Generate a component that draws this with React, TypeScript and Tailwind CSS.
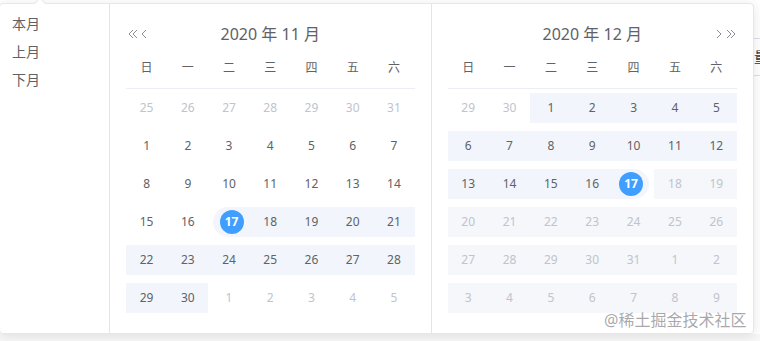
import clsx from "clsx";

type Kind = "other" | "normal" | "range" | "start" | "end" | "disabled";
type Cell = { d: number; kind: Kind };

const WEEK = ["日", "一", "二", "三", "四", "五", "六"];

function range(a: number, b: number, kind: Kind): Cell[] {
  const out: Cell[] = [];
  for (let i = a; i <= b; i++) out.push({ d: i, kind });
  return out;
}

const NOV: Cell[] = [
  ...range(25, 31, "other"),
  ...range(1, 16, "normal"),
  { d: 17, kind: "start" },
  ...range(18, 30, "range"),
  ...range(1, 5, "other"),
];

const DEC: Cell[] = [
  ...range(29, 30, "other"),
  ...range(1, 16, "range"),
  { d: 17, kind: "end" },
  ...range(18, 31, "disabled"),
  ...range(1, 9, "disabled"),
];

function DoubleLeft() {
  return (
    <svg width="10" height="10" viewBox="0 0 10 10" fill="none" stroke="#8a8d93" strokeWidth="1">
      <path d="M5 1 L1 5 L5 9 M9 1 L5 5 L9 9" />
    </svg>
  );
}

function Left() {
  return (
    <svg width="6" height="10" viewBox="0 0 6 10" fill="none" stroke="#8a8d93" strokeWidth="1">
      <path d="M5 1 L1 5 L5 9" />
    </svg>
  );
}

function Right() {
  return (
    <svg width="6" height="10" viewBox="0 0 6 10" fill="none" stroke="#8a8d93" strokeWidth="1">
      <path d="M1 1 L5 5 L1 9" />
    </svg>
  );
}

function DoubleRight() {
  return (
    <svg width="10" height="10" viewBox="0 0 10 10" fill="none" stroke="#8a8d93" strokeWidth="1">
      <path d="M1 1 L5 5 L1 9 M5 1 L9 5 L5 9" />
    </svg>
  );
}

function DayCell({ cell }: { cell: Cell }) {
  const { d, kind } = cell;
  const picked = kind === "start" || kind === "end";
  return (
    <div className="h-[38px] py-[4px]">
      <div
        className={clsx(
          "h-[30px] py-[3px]",
          (kind === "range" || picked) && "bg-[#f2f6fc]",
          kind === "disabled" && "bg-[#f5f7fa]",
          kind === "start" && "ml-[5px] rounded-l-[15px]",
          kind === "end" && "mr-[5px] rounded-r-[15px]"
        )}
      >
        <span
          className={clsx(
            "mx-auto block h-[24px] w-[24px] rounded-full text-center leading-[24px]",
            picked && "bg-[#409eff] font-bold text-white",
            (kind === "other" || kind === "disabled") && "text-[#c0c4cc]",
            (kind === "normal" || kind === "range") && "text-[#606266]"
          )}
        >
          {d}
        </span>
      </div>
    </div>
  );
}

function Month({ title, cells, left }: { title: string; cells: Cell[]; left: boolean }) {
  return (
    <div className={clsx("w-1/2 p-4", left && "border-r border-[#e4e4e4]")}>
      <div className="flex h-[28px] items-center">
        <div className="flex w-[60px] items-center justify-start gap-[3px] pl-[2px]">
          {left && (
            <>
              <DoubleLeft />
              <Left />
            </>
          )}
        </div>
        <div className="flex-1 text-center text-[16px] leading-[28px] text-[#606266]">{title}</div>
        <div className="flex w-[60px] items-center justify-end gap-[4px] pr-[1px]">
          {!left && (
            <>
              <Right />
              <DoubleRight />
            </>
          )}
        </div>
      </div>
      <div className="grid grid-cols-7 border-b border-[#ebeef5] text-[12px] text-[#606266]">
        {WEEK.map((w) => (
          <div key={w} className="h-[40px] text-center leading-[40px]">
            {w}
          </div>
        ))}
      </div>
      <div className="grid grid-cols-7 text-[12px]">
        {cells.map((c, i) => (
          <DayCell key={i} cell={c} />
        ))}
      </div>
    </div>
  );
}

export default function App() {
  return (
    <div
      className="relative h-[341px] w-[760px] overflow-hidden bg-[#f7f7f8]"
      style={{ fontFamily: '"Noto Sans", "Noto Sans CJK SC", sans-serif' }}
    >
      {/* page content behind the popper */}
      <div className="absolute left-0 top-0 h-[334px] w-[760px] bg-white" />
      <div className="absolute left-[745px] top-[38px] h-[38px] w-[40px] border-y border-[#dcdfe6] pl-[9px] text-[14px] leading-[36px] text-[#303133]">
        量
      </div>

      {/* popper */}
      <div className="absolute left-[-1px] top-[3px] w-[755px] rounded-[4px] border border-[#e4e7ed] bg-white shadow-[0_2px_12px_rgba(0,0,0,0.1)]">
        <div className="absolute left-[36px] top-[-5px] h-[8px] w-[8px] rotate-45 border-l border-t border-[#e4e7ed] bg-white" />
        <div className="flex">
          <div className="w-[110px] shrink-0 border-r border-[#e4e4e4] pt-[6px]">
            {["本月", "上月", "下月"].map((s) => (
              <div key={s} className="pl-[12px] text-[14px] leading-[28px] text-[#606266]">
                {s}
              </div>
            ))}
          </div>
          <div className="flex flex-1">
            <Month title="2020 年 11 月" cells={NOV} left />
            <Month title="2020 年 12 月" cells={DEC} left={false} />
          </div>
        </div>
      </div>

      <div className="absolute left-[604px] top-[308px] text-[16px] leading-[24px] text-[rgba(140,140,145,0.75)]">
        @稀土掘金技术社区
      </div>
    </div>
  );
}
